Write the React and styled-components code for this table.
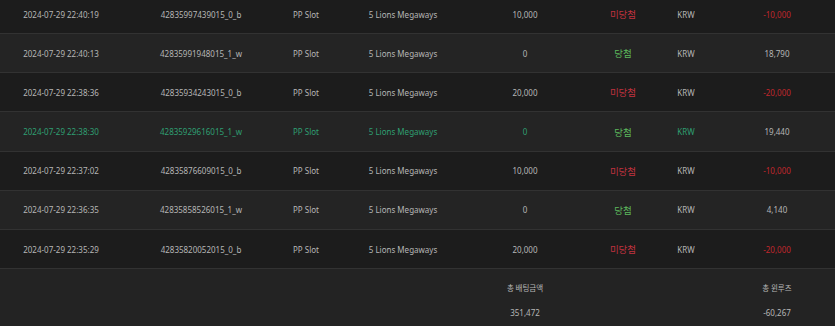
import React from "react";
import styled, { createGlobalStyle } from "styled-components";

const GlobalStyles = createGlobalStyle`
  html, body {
    margin: 0;
    padding: 0;
    background: #232323;
    overflow: hidden;
  }
  body {
    font-family: "Noto Sans", "Noto Sans CJK KR", sans-serif;
  }
`;

const COLS = "122px 158px 52px 142px 102px 94px 32px 150px";

const Page = styled.div`
  width: 852px;
  height: 326px;
  overflow: hidden;
  background: #232323;
`;

const Table = styled.div`
  margin-top: -5px;
`;

const Row = styled.div`
  display: grid;
  grid-template-columns: ${COLS};
  align-items: center;
  height: 39.17px;
  box-sizing: border-box;
  border-bottom: 1px solid #323232;
  background: ${(p) => (p.$odd ? "#1c1c1c" : "#242424")};
  color: ${(p) => (p.$hl ? "#2f9f72" : "#b6b6b6")};
`;

const Cell = styled.div`
  text-align: center;
  font-size: 8px;
  white-space: nowrap;
  color: ${(p) => p.$color || "inherit"};
`;

const Result = styled.div`
  text-align: center;
  font-family: "Noto Sans CJK KR", sans-serif;
  font-size: 9.5px;
  color: ${(p) => (p.$win ? "#5cb85c" : "#c0323f")};
`;

const Summary = styled.div`
  display: grid;
  grid-template-columns: ${COLS};
  grid-template-rows: 36px 14px;
  align-items: center;
  background: #232323;
  color: #b6b6b6;
`;

const SumLabel = styled.div`
  grid-column: ${(p) => p.$col};
  text-align: center;
  font-family: "Noto Sans CJK KR", sans-serif;
  font-size: 7.5px;
  padding-top: 1px;
`;

const SumValue = styled.div`
  grid-column: ${(p) => p.$col};
  text-align: center;
  font-size: 8px;
`;

const rows = [
  ["2024-07-29 22:40:19", "42835997439015_0_b", "10,000", false, "-10,000"],
  ["2024-07-29 22:40:13", "42835991948015_1_w", "0", true, "18,790"],
  ["2024-07-29 22:38:36", "42835934243015_0_b", "20,000", false, "-20,000"],
  ["2024-07-29 22:38:30", "42835929616015_1_w", "0", true, "19,440", true],
  ["2024-07-29 22:37:02", "42835876609015_0_b", "10,000", false, "-10,000"],
  ["2024-07-29 22:36:35", "42835858526015_1_w", "0", true, "4,140"],
  ["2024-07-29 22:35:29", "42835820052015_0_b", "20,000", false, "-20,000"],
];

export default function App() {
  return (
    <Page>
      <GlobalStyles />
      <Table>
        {rows.map(([date, id, bet, win, amount, hl], i) => (
          <Row key={id} $odd={i % 2 === 0} $hl={hl}>
            <Cell>{date}</Cell>
            <Cell>{id}</Cell>
            <Cell>PP Slot</Cell>
            <Cell>5 Lions Megaways</Cell>
            <Cell>{bet}</Cell>
            <Result $win={win}>{win ? "당첨" : "미당첨"}</Result>
            <Cell>KRW</Cell>
            <Cell $color={win ? "#b6b6b6" : "#c0272d"}>{amount}</Cell>
          </Row>
        ))}
      </Table>
      <Summary>
        <SumLabel $col={5}>총 배팅금액</SumLabel>
        <SumLabel $col={8}>총 윈루즈</SumLabel>
        <SumValue $col={5}>351,472</SumValue>
        <SumValue $col={8}>-60,267</SumValue>
      </Summary>
    </Page>
  );
}
